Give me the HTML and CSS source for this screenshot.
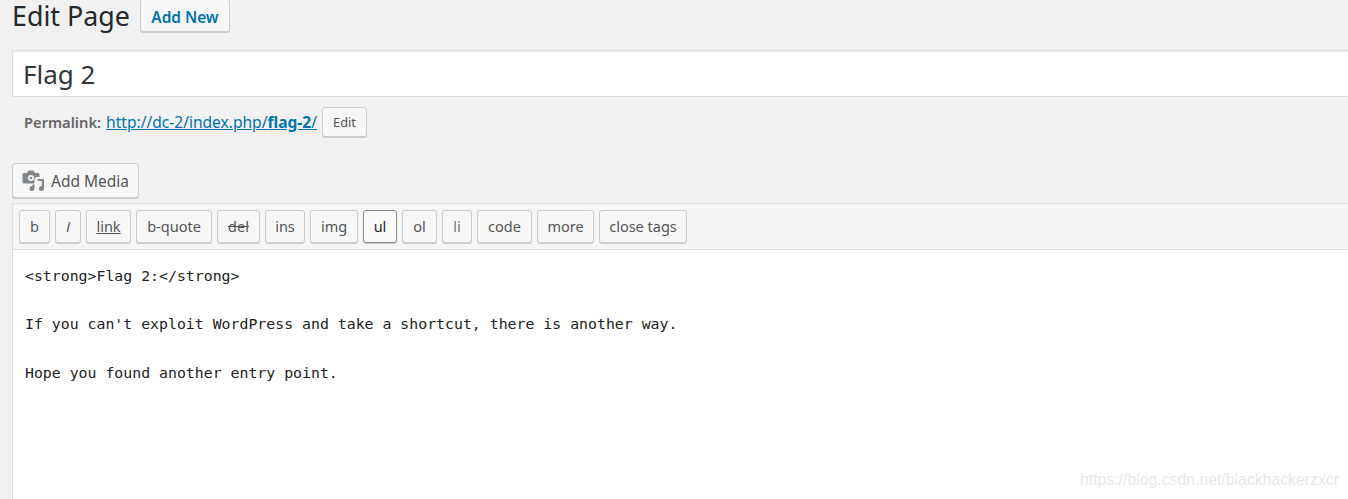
FILE: index.html
```html
<!DOCTYPE html>
<html lang="en">
<head>
<meta charset="utf-8">
<title>Edit Page</title>
<link rel="stylesheet" href="styles.css">
</head>
<body>
<main class="wrap">
  <div class="head">
    <h1 class="title">Edit Page</h1>
    <a class="btn add-new">Add New</a>
  </div>
  <div class="title-box">Flag 2</div>
  <div class="permalink">
    <strong class="perm-label">Permalink:</strong>
    <a class="perm-link">http://dc-2/index.php/<b>flag-2</b>/</a>
    <span class="btn perm-edit">Edit</span>
  </div>
  <div class="media-row">
    <span class="btn media">
      <svg class="media-icon" width="23" height="22" viewBox="0 0 23 22"><path fill="#82878c" fill-rule="evenodd" d="M2 3h3l1.500-2.500h5L13 3h3a1.500 1.500 0 0 1 1.500 1.500V7h-2.500a2.500 2.500 0 0 0-2.500 2.500v4H2A1.500 1.500 0 0 1 .5 12V4.500A1.500 1.500 0 0 1 2 3zm7 2a3 3 0 1 0 0 6 3 3 0 0 0 0-6z"/><circle fill="#82878c" cx="9" cy="8" r="1.300"/><path fill="#82878c" d="M15.500 9H22v9.500a2.500 2.500 0 1 1-2.200-2.500V11h-4.300z"/><path fill="#82878c" d="M12.500 14.500v4a2.500 2.500 0 1 1-2.200-2.500v-1.500z"/></svg>
      Add Media
    </span>
  </div>
  <div class="editor">
    <div class="toolbar">
      <span class="btn tag tag-b">b</span>
      <span class="btn tag tag-i"><i>i</i></span>
      <span class="btn tag tag-link"><u>link</u></span>
      <span class="btn tag tag-quote">b-quote</span>
      <span class="btn tag tag-del"><s>del</s></span>
      <span class="btn tag tag-ins">ins</span>
      <span class="btn tag tag-img">img</span>
      <span class="btn tag tag-ul">ul</span>
      <span class="btn tag tag-ol">ol</span>
      <span class="btn tag tag-li">li</span>
      <span class="btn tag tag-code">code</span>
      <span class="btn tag tag-more">more</span>
      <span class="btn tag tag-close">close tags</span>
    </div>
    <pre class="content">&lt;strong&gt;Flag 2:&lt;/strong&gt;

If you can't exploit WordPress and take a shortcut, there is another way.

Hope you found another entry point.</pre>
  </div>
</main>
<div class="watermark">https://blog.csdn.net/blackhackerzxcr</div>
</body>
</html>
```
FILE: styles.css
```css
html, body {
  margin: 0;
  height: 499px;
  overflow: hidden;
  background: #f1f1f1;
}
body {
  position: relative;
  font-family: "Noto Sans", "Open Sans", sans-serif;
  color: #555;
}
.wrap {
  width: 1400px;
  margin-left: 12px;
}
.btn {
  display: inline-flex;
  align-items: center;
  justify-content: center;
  box-sizing: border-box;
  background: #f7f7f7;
  border: 1px solid #ccc;
  border-radius: 3px;
  box-shadow: 0 1px 0 #ccc;
  color: #555;
  white-space: nowrap;
}
.head {
  display: flex;
  align-items: flex-start;
  height: 50px;
}
.title {
  margin: 0;
  width: 128px;
  font-size: 26.800px;
  line-height: 32px;
  font-weight: 400;
  color: #23282d;
}
.add-new {
  width: 90px;
  height: 33px;
  margin-top: -1px;
  padding-top: 3px;
  font-size: 15.400px;
  font-weight: 600;
  color: #0073aa;
}
.title-box {
  box-sizing: border-box;
  height: 47px;
  padding-left: 10px;
  background: #fff;
  border: 1px solid #ddd;
  box-shadow: inset 0 1px 2px rgba(0,0,0,.07);
  font-size: 26px;
  line-height: 47px;
  color: #32373c;
}
.permalink {
  display: flex;
  align-items: center;
  height: 30px;
  margin-top: 10px;
  padding-left: 12px;
  font-size: 14.700px;
  color: #666;
}
.perm-label {
  font-weight: 600;
}
.perm-link {
  margin-left: 5px;
  font-size: 15.550px;
  color: #0073aa;
  text-decoration: underline;
}
.perm-edit {
  width: 45px;
  height: 30px;
  margin-left: 5px;
  font-size: 12.800px;
}
.media-row {
  margin-top: 26px;
  height: 40px;
}
.media {
  width: 127px;
  height: 35px;
  justify-content: flex-start;
  padding-left: 9px;
  font-size: 15.500px;
  gap: 6px;
}
.media-icon {
  flex: none;
}
.editor {
  background: #fff;
  border-left: 1px solid #ddd;
  height: 296px;
}
.toolbar {
  display: flex;
  gap: 5px;
  box-sizing: border-box;
  height: 47px;
  padding: 6px 6px 0;
  background: #f5f5f5;
  border-top: 1px solid #ddd;
  border-bottom: 1px solid #ddd;
}
.tag {
  height: 33px;
  padding-bottom: 2px;
  font-size: 14.500px;
}
.tag-b { width: 31px; }
.tag-i { width: 26px; }
.tag-link { width: 45px; }
.tag-quote { width: 76px; }
.tag-del { width: 43px; }
.tag-ins { width: 40px; }
.tag-img { width: 48px; }
.tag-ul { width: 34px; background: #fafafa; border-color: #8a8a8a; color: #23282d; }
.tag-ol { width: 35px; }
.tag-li { width: 30px; color: #777; }
.tag-code { width: 55px; }
.tag-more { width: 57px; }
.tag-close { width: 88px; }
.content {
  margin: 0;
  padding: 14px 12px 0;
  font-family: "DejaVu Sans Mono", "Liberation Mono", monospace;
  font-size: 14.850px;
  line-height: 24.200px;
  color: #222;
}
.watermark {
  position: absolute;
  right: 9px;
  top: 471px;
  font-family: "Liberation Sans", Arial, sans-serif;
  font-size: 15.800px;
  color: #e8e8e8;
}
```
